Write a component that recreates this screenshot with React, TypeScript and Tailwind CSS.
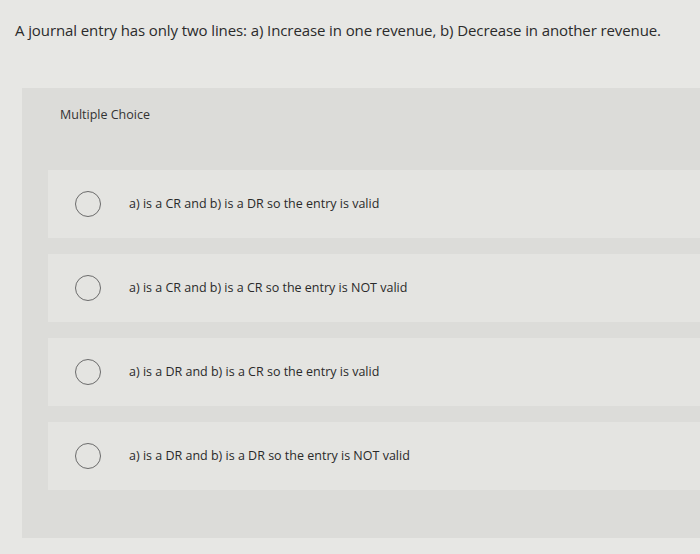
const OPTIONS = [
  'a) is a CR and b) is a DR so the entry is valid',
  'a) is a CR and b) is a CR so the entry is NOT valid',
  'a) is a DR and b) is a CR so the entry is valid',
  'a) is a DR and b) is a DR so the entry is NOT valid',
]

export default function App() {
  return (
    <div
      className="flex h-[554px] w-[700px] flex-col overflow-hidden bg-[#e7e7e4] text-[#2f2f2f]"
      style={{ fontFamily: '"Open Sans", Lato, sans-serif' }}
    >
      <p className="mt-[20px] pl-[15px] text-[15px] leading-5 tracking-[-0.1px] text-[#2b2b2b]">
        A journal entry has only two lines: a) Increase in one revenue, b) Decrease in another revenue.
      </p>

      <div className="mt-[48px] ml-[22px] flex h-[450px] flex-col bg-[#dcdcd9] pt-[17px]">
        <p className="pl-[38px] text-[12.5px] leading-5 text-[#333]">Multiple Choice</p>

        <div className="mt-[45px] flex flex-col gap-[16px] pl-[26px]">
          {OPTIONS.map((text) => (
            <div key={text} className="flex h-[68px] items-center bg-[#e4e4e1]">
              <span className="ml-[27px] size-[26px] shrink-0 rounded-full border-[1.5px] border-[#6b6b6b]" />
              <span className="ml-[28px] text-[12.5px] text-[#2a2a2a]">{text}</span>
            </div>
          ))}
        </div>
      </div>
    </div>
  )
}
